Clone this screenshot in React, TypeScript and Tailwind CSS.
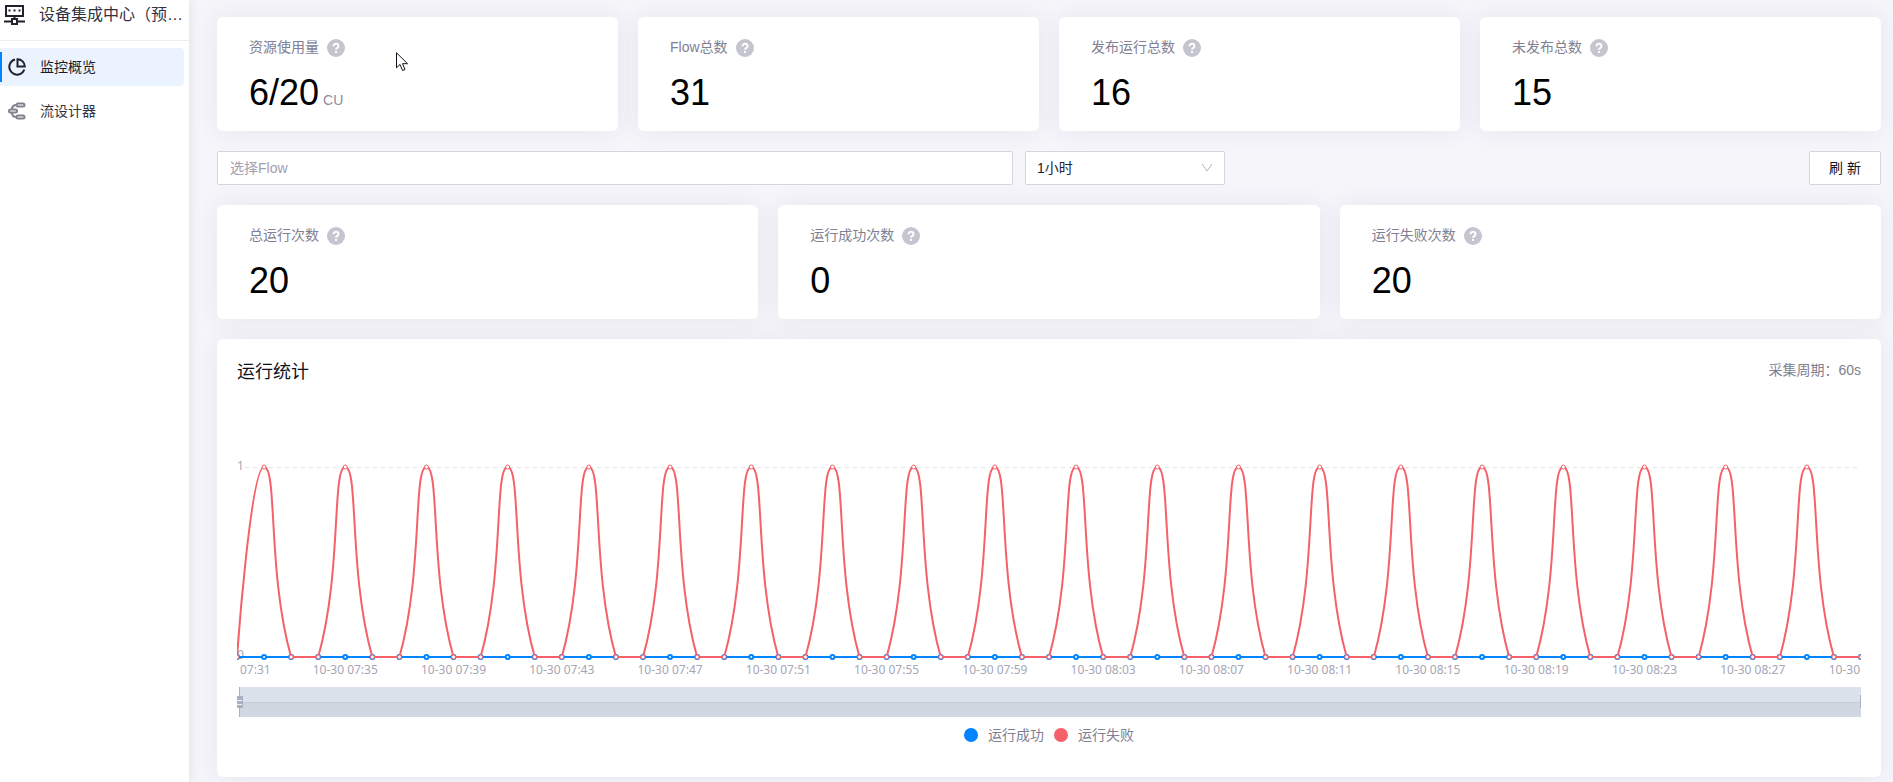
import React from "react";

interface StatCardProps {
  label: string;
  value: string;
  unit?: string;
}

const flowStats: StatCardProps[] = [
  { label: "资源使用量", value: "6/20", unit: "CU" },
  { label: "Flow总数", value: "31" },
  { label: "发布运行总数", value: "16" },
  { label: "未发布总数", value: "15" },
];

const runStats: StatCardProps[] = [
  { label: "总运行次数", value: "20" },
  { label: "运行成功次数", value: "0" },
  { label: "运行失败次数", value: "20" },
];

const axisLabels = [
  "07:31",
  "10-30 07:35",
  "10-30 07:39",
  "10-30 07:43",
  "10-30 07:47",
  "10-30 07:51",
  "10-30 07:55",
  "10-30 07:59",
  "10-30 08:03",
  "10-30 08:07",
  "10-30 08:11",
  "10-30 08:15",
  "10-30 08:19",
  "10-30 08:23",
  "10-30 08:27",
  "10-30",
];

const HelpIcon = () => (
  <svg width="18" height="18" viewBox="0 0 18 18" aria-hidden="true">
    <circle cx="9" cy="9" r="9" fill="#c5c5d0" />
    <path d="M6.500 7.300V7a2.500 2.300 0 1 1 3.900 1.900c-1 .6-1.400.9-1.400 1.900" fill="none" stroke="#fff" strokeWidth="2" />
    <rect x="8" y="12" width="2" height="2" fill="#fff" />
  </svg>
);

const StatCard: React.FC<StatCardProps> = ({ label, value, unit }) => (
  <section className="h-[114px] rounded-md bg-white px-8 pt-5 shadow-[0_0_24px_rgba(60,50,110,0.08)]">
    <div className="flex items-center gap-2 text-sm leading-5 text-[#808092]">
      <h2>{label}</h2>
      <button type="button" aria-label={`${label}说明`} className="mt-0.5">
        <HelpIcon />
      </button>
    </div>
    <p className="mt-3 flex items-baseline gap-1 text-4xl leading-[48px] text-black">
      {value}
      {unit && <span className="text-sm leading-5 text-[#8c8c9b]">{unit}</span>}
    </p>
  </section>
);

const Sidebar = () => (
  <aside className="z-10 w-[189px] shrink-0 bg-white shadow-[0_0_12px_rgba(60,50,110,0.12)]">
    <div className="flex h-[41px] items-start gap-[14px] border-b border-[#ebebf0] pl-1">
      <svg width="21" height="26" viewBox="0 0 21 26" className="shrink-0" fill="none" stroke="#22222e" strokeWidth="2" aria-hidden="true">
        <path d="M2 6h17v10H2zM10.500 16v4M0 21.500h7M14 21.500h7" />
        <path d="M4.500 10.500h2M9.500 10.500h2M14.500 10.500h2" />
        <rect x="8" y="19" width="5" height="5" />
      </svg>
      <h1 className="text-base leading-[30px] whitespace-nowrap text-[#33333f]">设备集成中心（预…</h1>
    </div>
    <nav className="mt-[7px] flex flex-col gap-[6px] text-sm text-[#33333f]">
      <a href="#overview" className="relative mr-[5px] flex h-[38px] items-center gap-[14px] rounded-r bg-[#ebf3fe] pl-2">
        <span className="absolute top-1 left-0 h-[30px] w-[2px] bg-[#0084ff]" />
        <svg width="18" height="18" viewBox="0 0 18 18" fill="none" stroke="#22222e" strokeWidth="2" aria-hidden="true">
          <path d="M7 1.500A7.700 7.700 0 1 0 16.300 11.500" />
          <path d="M9.500 1.200v7.300h7.300A7.300 7.300 0 0 0 9.500 1.200z" />
        </svg>
        <span className="text-[#1c1c28]">监控概览</span>
      </a>
      <a href="#designer" className="mr-[5px] flex h-[38px] items-center gap-[14px] pl-2">
        <svg width="18" height="18" viewBox="0 0 18 18" fill="none" stroke="#82828f" strokeWidth="2" aria-hidden="true">
          <rect x="8.500" y="1.500" width="8" height="3" rx="1.500" />
          <rect x="1" y="7.500" width="8" height="3" rx="1.500" />
          <rect x="8.500" y="13.500" width="8" height="3" rx="1.500" />
          <path d="M8.500 3C5 3 4 5 4 7.500M4 10.500C4 13 5 15 8.500 15" />
        </svg>
        <span>流设计器</span>
      </a>
    </nav>
  </aside>
);

const STEP = 1624 / 60;
const TOP = 17;
const BASE = 207;

// one failed run every third minute, starting from the second sample
const failures = Array.from({ length: 61 }, (_, i) => (i % 3 === 1 && i < 60 ? 1 : 0));

const failurePath = () => {
  let d = `M0 ${BASE}`;
  for (let i = 1; i < failures.length; i++) {
    const x0 = (i - 1) * STEP;
    const x = i * STEP;
    if (i === 1) {
      d += `C0 ${BASE} ${x - 13.5} ${TOP} ${x} ${TOP}`;
    } else if (failures[i] === 1) {
      d += `C${x0 + 23.7} ${BASE - 83} ${x - 13.5} ${TOP} ${x} ${TOP}`;
    } else if (failures[i - 1] === 1) {
      d += `C${x0 + 13.5} ${TOP} ${x - 23.7} ${BASE - 83} ${x} ${BASE}`;
    } else {
      d += `L${x} ${BASE}`;
    }
  }
  return d;
};

const RunChart = () => (
  <svg viewBox="0 0 1624 268" className="block w-full" fontFamily="'Noto Sans', sans-serif" fontSize="12" fill="#a6a6b5" role="img" aria-label="运行统计">
    <line x1="8" x2="1620" y1="17.500" y2="17.500" stroke="#e2e2e8" strokeDasharray="4 4" />
    <text x="0" y="20">1</text>
    <text x="0" y="209">0</text>
    <line x1="0" x2="1624" y1={BASE} y2={BASE} stroke="#0084ff" strokeWidth="2" />
    {failures.map((_, i) => (
      <circle key={i} cx={i * STEP} cy={BASE} r="2" fill="#fff" stroke="#0084ff" strokeWidth="2" />
    ))}
    <path d={failurePath()} fill="none" stroke="#f5616a" strokeWidth="2" strokeLinejoin="bevel" />
    {failures.map((v, i) => (
      <circle key={i} cx={i * STEP} cy={v ? TOP : BASE} r="2" fill="#fff" stroke="#f5616a" strokeWidth="1" />
    ))}
    {axisLabels.map((label, i) => {
      const first = i === 0;
      const last = i === axisLabels.length - 1;
      return (
        <text key={label} x={first ? 3 : last ? 1623 : i * 4 * STEP} y="224" textAnchor={first ? "start" : last ? "end" : "middle"}>
          {label}
        </text>
      );
    })}
    {/* zoom slider */}
    <rect x="2" y="237" width="1622" height="30" fill="#dbe2eb" />
    <rect x="2" y="252" width="1622" height="15" fill="#d0d7e1" />
    <path d="M2 252.500h1622" stroke="#c5ccd8" />
    <path d="M2.500 237v30" stroke="#a9b1c2" />
    <path d="M0 246h6v12H0z" fill="#a9b1c2" />
    <path d="M0 250.500h5M0 254.500h5" stroke="#eef1f6" />
    <path d="M1623.500 245v13" stroke="#a9b1c2" />
  </svg>
);

const App: React.FC = () => {
  return (
    <div className="flex min-h-screen bg-[#f5f5fa] font-['Liberation_Sans','Noto_Sans_CJK_SC',sans-serif]">
      <Sidebar />
      <main className="flex min-w-0 flex-1 flex-col gap-5 pt-[17px] pr-3 pb-[5px] pl-7">
        <div className="grid grid-cols-4 gap-5">
          {flowStats.map((item) => (
            <StatCard key={item.label} {...item} />
          ))}
        </div>

        <div className="flex h-[34px] gap-3 text-sm">
          <input
            type="text"
            aria-label="选择Flow"
            placeholder="选择Flow"
            className="w-[796px] rounded-xs border border-[#d5d5de] bg-white px-3 placeholder:text-[#a0a0b0]"
          />
          <div className="relative w-[200px]">
            <select aria-label="时间范围" className="h-full w-full appearance-none rounded-xs border border-[#d5d5de] bg-white px-[11px] text-[#22222e]">
              <option>1小时</option>
            </select>
            <svg width="12" height="12" viewBox="0 0 12 12" className="pointer-events-none absolute top-[11px] right-3" fill="none" stroke="#b0b0bd" aria-hidden="true">
              <path d="M1 2l5 7 5-7" />
            </svg>
          </div>
          <button type="button" className="ml-auto w-[72px] rounded-xs border border-[#d5d5de] bg-white text-[#11111c]">
            刷 新
          </button>
        </div>

        <div className="grid grid-cols-3 gap-5">
          {runStats.map((item) => (
            <StatCard key={item.label} {...item} />
          ))}
        </div>

        <section className="rounded-md bg-white px-5 pt-5 pb-8 shadow-[0_0_24px_rgba(60,50,110,0.08)]">
          <div className="flex items-start justify-between">
            <h2 className="text-lg leading-[26px] text-[#11111c]">运行统计</h2>
            <span className="text-sm leading-[22px] text-[#808092]">采集周期：60s</span>
          </div>
          <div className="mt-[65px]">
            <RunChart />
          </div>
          <ul className="mt-[7px] flex justify-center gap-[10px] text-sm leading-5 text-[#808092]">
            <li className="flex items-center gap-[10px]">
              <span className="size-[14px] rounded-full bg-[#0084ff]" />
              运行成功
            </li>
            <li className="flex items-center gap-[10px]">
              <span className="size-[14px] rounded-full bg-[#f5616a]" />
              运行失败
            </li>
          </ul>
        </section>
      </main>

      {/* mouse pointer */}
      <svg width="14" height="20" viewBox="0 0 14 20" className="pointer-events-none absolute top-[52px] left-[396px]" aria-hidden="true">
        <path d="M.5.800v15l3.500-3.300 2.500 6 2.500-1-2.500-5.800h5z" fill="#fff" stroke="#11111c" />
      </svg>
    </div>
  );
};

export default App;
